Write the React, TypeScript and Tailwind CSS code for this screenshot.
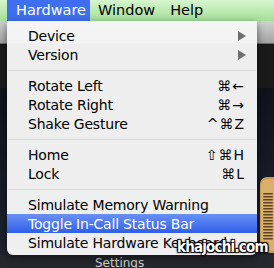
import React from 'react';

type Item = { label: string; keys?: string; submenu?: boolean; active?: boolean };

const groups: Item[][] = [
  [
    { label: 'Device', submenu: true },
    { label: 'Version', submenu: true },
  ],
  [
    { label: 'Rotate Left', keys: '⌘←' },
    { label: 'Rotate Right', keys: '⌘→' },
    { label: 'Shake Gesture', keys: '^⌘Z' },
  ],
  [
    { label: 'Home', keys: '⇧⌘H' },
    { label: 'Lock', keys: '⌘L' },
  ],
  [
    { label: 'Simulate Memory Warning' },
    { label: 'Toggle In-Call Status Bar', active: true },
    { label: 'Simulate Hardware Keyboard' },
  ],
];

function Row({ item }: { item: Item }) {
  return (
    <div
      className={`flex h-[19px] items-center justify-between whitespace-nowrap pl-[21px] pr-[12px] text-[14px] leading-none tracking-[-0.2px] ${
        item.active ? 'bg-gradient-to-b from-[#6b8ff6] to-[#2f5fe9] text-white' : 'text-black'
      }`}
    >
      <span>{item.label}</span>
      {item.keys && <span className="text-[14px] tracking-[1px]">{item.keys}</span>}
      {item.submenu && (
        <span className="mr-[-1px] h-0 w-0 border-y-[5px] border-l-[8px] border-y-transparent border-l-[#6e6e6e]" />
      )}
    </div>
  );
}

function Spiral() {
  return (
    <svg width="16" height="76" viewBox="0 0 16 76">
      <rect x="0" y="0" width="20" height="76" rx="7" fill="#c79a52" />
      <rect x="1" y="2" width="18" height="72" rx="6" fill="#d9b06a" />
      {Array.from({ length: 16 }).map((_, i) => (
        <rect key={i} x="3" y={16 + i * 3} width="10" height="1.6" rx="0.8" fill="#5a4326" />
      ))}
    </svg>
  );
}

export default function App() {
  return (
    <div className="relative h-[268px] w-[274px] overflow-hidden bg-[#1b1b1b] font-['DejaVu_Sans',sans-serif]">
      <div className="flex h-full flex-col">
        <div className="flex h-[21px] items-center whitespace-nowrap bg-gradient-to-b from-[#d6f5cd] to-[#a6df98] text-[14.5px] text-black">
          <div className="ml-[7px] flex h-full w-[83px] items-center bg-[#3e6ff0] pl-[9px] text-white">Hardware</div>
          <span className="ml-[8px]">Window</span>
          <span className="ml-[15px]">Help</span>
        </div>
        <div className="h-[23px] border-b border-[#6a6a6a] bg-gradient-to-b from-[#d2d2d2] to-[#a4a4a4]" />
        <div className="h-[44px] bg-[#1a1a1a]" />
        <div className="flex-1 bg-gradient-to-b from-[#0e131d] to-[#1d2330]" />
        <div className="h-[13px] bg-[#25282d] pl-[95px] pt-[2px] text-[12px] leading-none text-[#d6d6d6]">Settings</div>
      </div>

      <div className="absolute left-[7px] top-[21px] w-[250px] rounded-b-[6px] bg-[#f6f6f6]/[0.97] pb-[3px] pt-[5px] shadow-[0_3px_8px_rgba(0,0,0,0.5)]">
        {groups.map((g, gi) => (
          <div key={gi}>
            {gi > 0 && (
              <div className="flex h-[12px] items-center px-[1px]">
                <div className="h-px w-full bg-[#d9d9d9]" />
              </div>
            )}
            {g.map((it) => (
              <Row key={it.label} item={it} />
            ))}
          </div>
        ))}
      </div>

      <div className="absolute left-[260px] top-[177px]">
        <Spiral />
      </div>

      <div className="absolute left-[177px] top-[240px] whitespace-nowrap font-['DejaVu_Sans_Condensed',sans-serif] text-[15px] font-bold leading-none tracking-[-0.8px] text-white [text-shadow:0_0_1px_#000,1px_1px_1px_#000,-1px_-1px_1px_#000,1px_-1px_1px_#000,-1px_1px_1px_#000]">
        khajochi.com
      </div>
    </div>
  );
}
